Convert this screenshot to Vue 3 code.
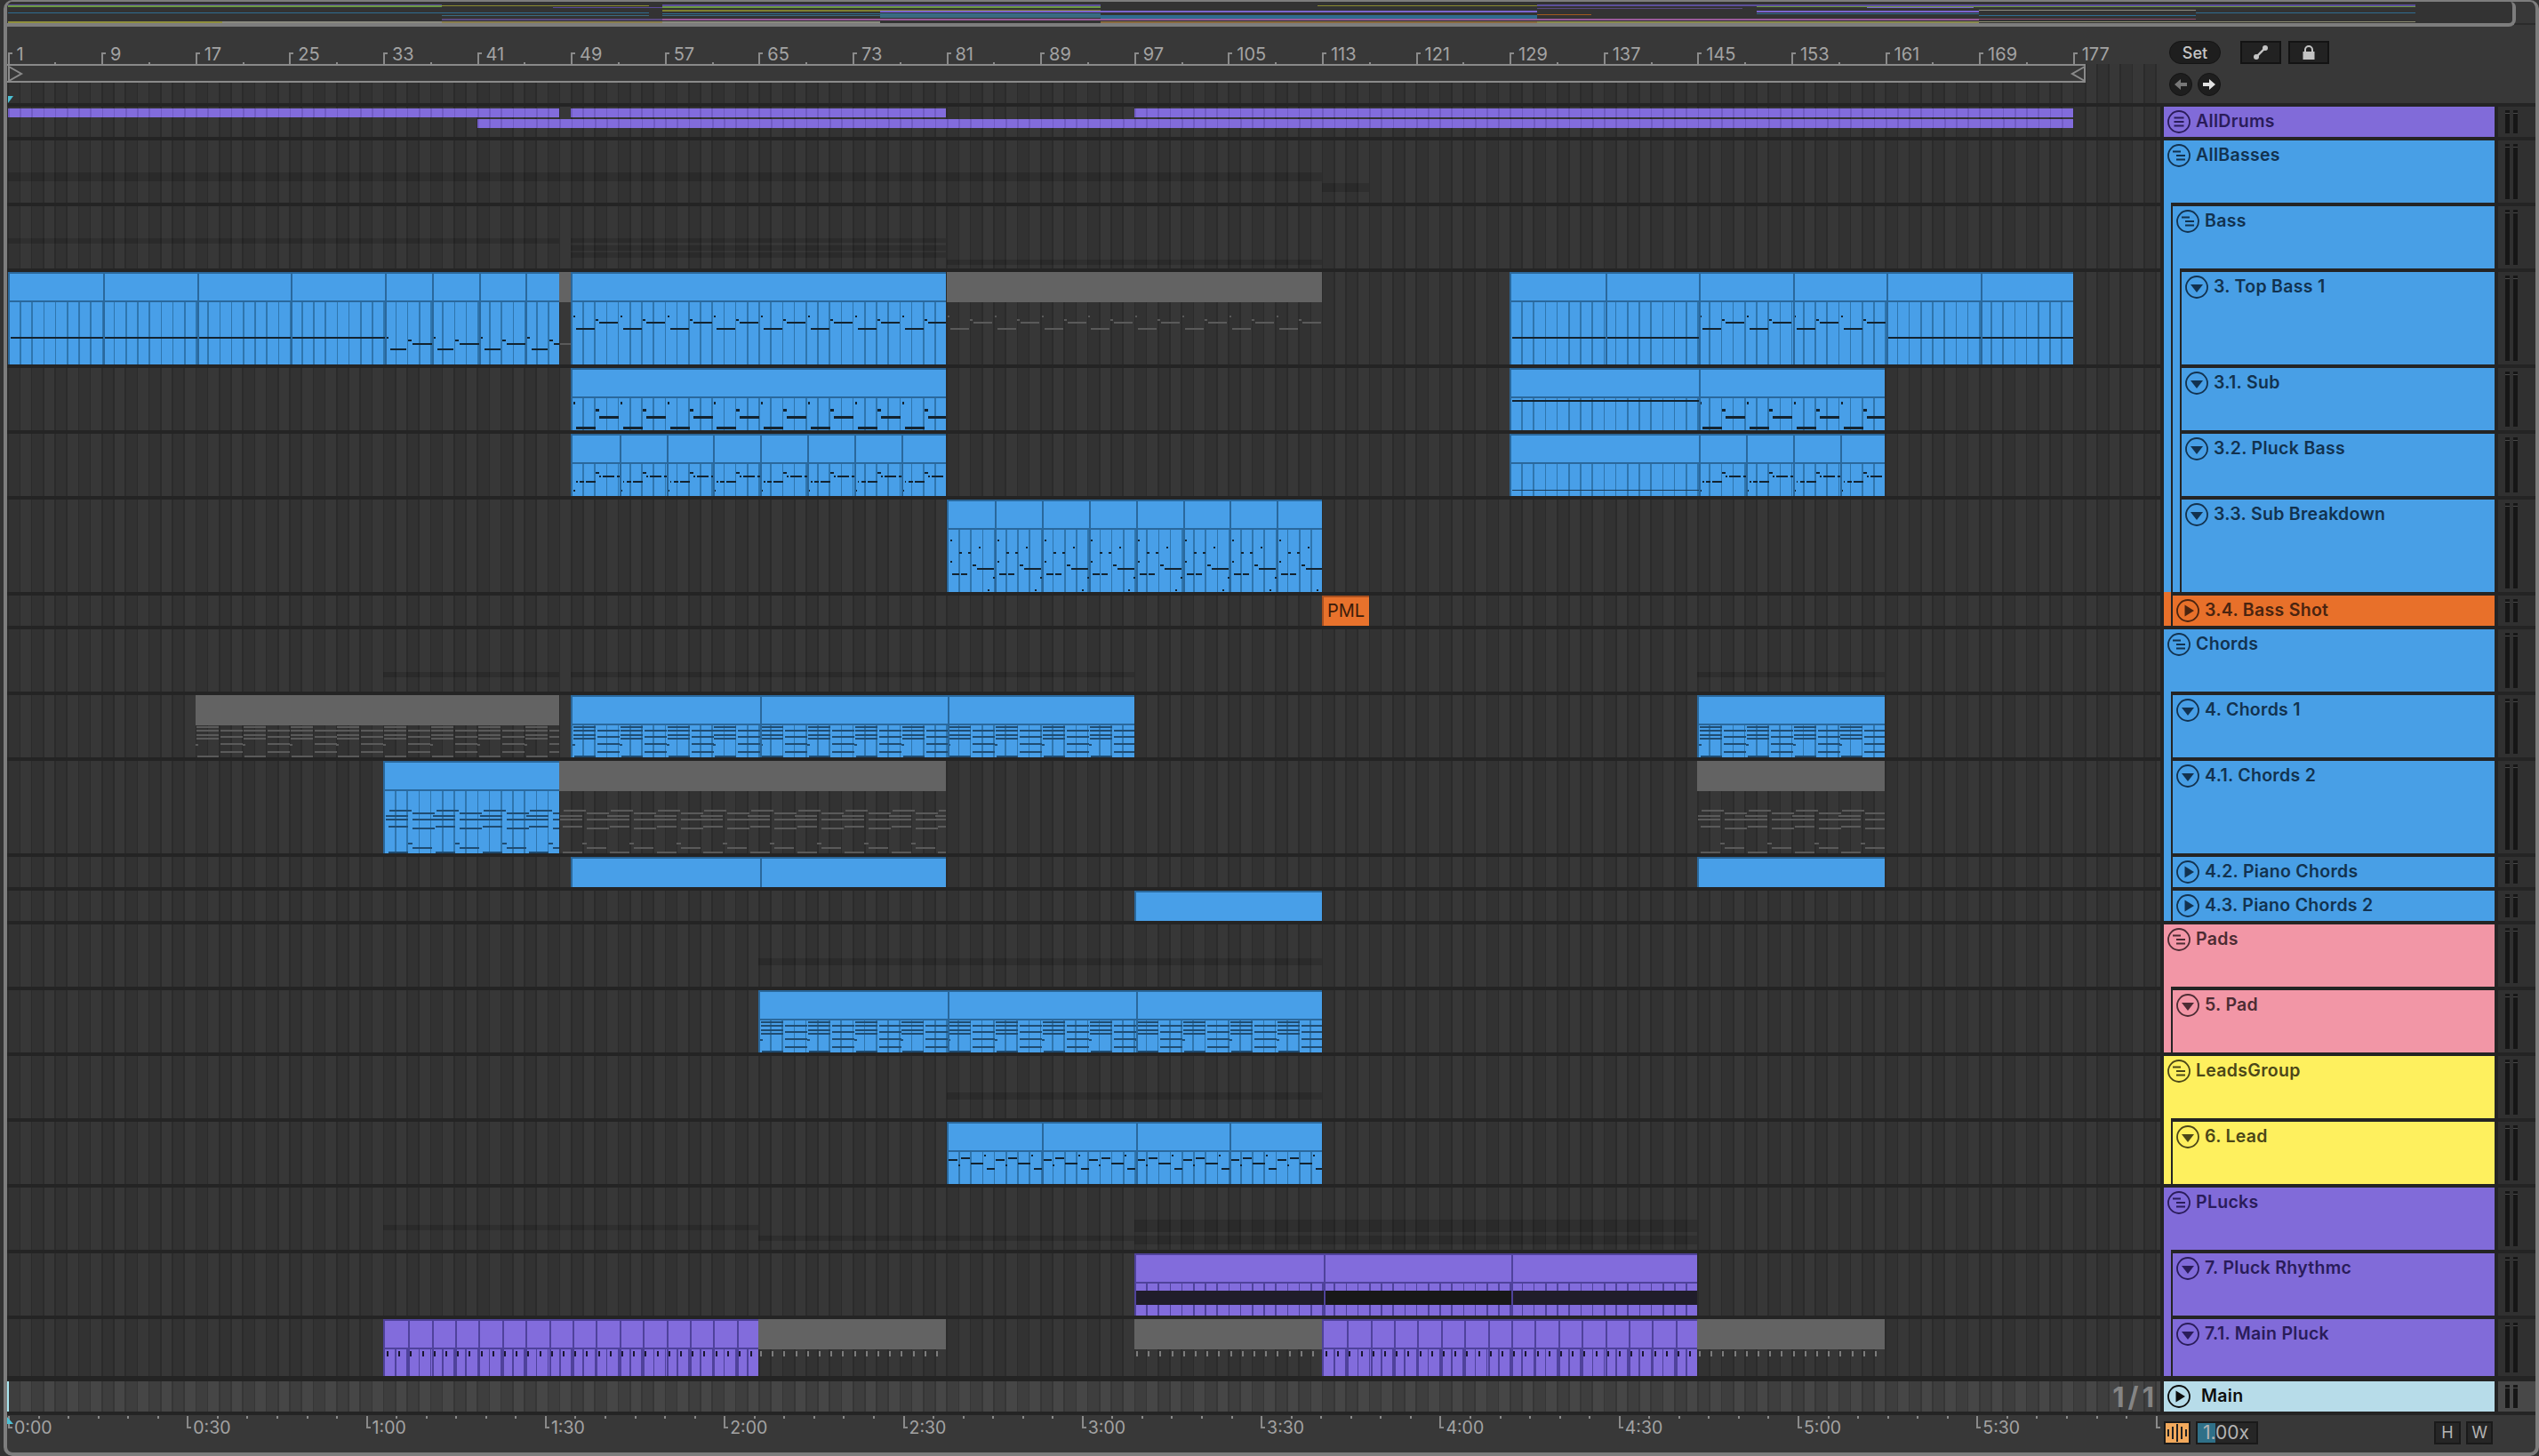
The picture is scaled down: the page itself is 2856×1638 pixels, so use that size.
<script setup>
// Arrangement view: timeline on the left, track headers on the right
const B = 13.2
const barX = (bar) => 0.5 + (bar - 1) * B

const rep = (clipFrom, from, to, pattern, periodBars = 4, fill) => {
  const out = []
  const start = (from - clipFrom) * B
  const end = (to - clipFrom) * B
  for (let x0 = start; x0 < end; x0 += periodBars * B) {
    for (const [x, y, w, h] of pattern) {
      const nx = x0 + x
      if (nx >= end) continue
      out.push({ x: nx, y, w: Math.min(w, end - nx), h, fill })
    }
  }
  return out
}
const line = (clipFrom, from, to, y, h = 2, fill) => [
  { x: (from - clipFrom) * B + 1, y, w: (to - from) * B - 1, h, fill }
]
const every = (from, to, step) => {
  const out = []
  for (let b = from + step; b < to; b += step) out.push(b)
  return out
}

const topBassA = [[1, 39, 3, 2], [6, 52, 18, 2], [26, 42, 4, 2], [31, 46, 22, 2]]
const topBassB = [[1, 15, 2, 2], [4, 29, 21, 2], [26, 19, 3, 2], [30, 22, 21, 2]]
const subPat = [[1, 4, 2, 3], [4, 32, 22, 3], [26, 12, 4, 3], [30, 20, 22, 3]]
const pluckPat = [[1, 29, 2, 2], [4, 19, 1.5, 2], [8, 19, 5, 2], [15, 19, 11, 2], [26, 9, 4, 2], [30, 13, 2, 2], [34, 13, 13, 2], [50, 13, 3, 2]]
const breakPat = [[2, 11, 2, 2], [12, 25, 3, 2], [22, 25, 3, 2], [34, 19, 2, 2], [2, 35, 2, 2], [4, 49, 8, 2], [14, 49, 7, 2], [27, 39, 4, 2], [32, 43, 19, 2], [50, 53, 2, 2], [44, 67, 2, 2]]
const chordShort = [[1, 1, 25, 2], [1, 5, 25, 2], [1, 10, 25, 2], [1, 14, 25, 2], [0, 21, 3, 2], [2, 34, 24, 2], [28, 5, 25, 2], [28, 12, 25, 2], [28, 20, 25, 2], [28, 29, 25, 2]]
const chordTall = [[5, 21, 25, 2], [1, 27, 25, 2], [1, 31, 25, 2], [4, 39, 22, 2], [4, 68, 22, 2], [31, 24, 25, 2], [31, 31, 25, 2], [31, 41, 25, 2], [26, 58, 5, 2], [31, 63, 22, 2]]
const leadPat = [[0, 8, 10, 2], [11, 14, 2, 2], [14, 6, 10, 2], [25, 12, 14, 2], [40, 3, 2, 2], [43, 18, 9, 2]]
const tickPat = [[2, 2, 2, 6]]

const DARK = '#13232f'
const CHORD = '#1f4c72'
const GHOST = '#5a5a5a'
const PDARK = '#1a1630'
const GTICK = '#7c7c7c'

const clip = (kind, from, to, extra = {}) => ({ kind, from, to, splits: [], notes: [], ...extra })
const shade = (from, to, dy, h) => ({ from, to, dy, h })

const tracks = [
  { name: 'AllDrums', level: 0, h: 34, color: 'purple', icon: 'lines',
    strips: [[1, 48, 2], [49, 81, 2], [97, 177, 2], [41, 177, 14]] },
  { name: 'AllBasses', level: 0, h: 70, color: 'blue', icon: 'group',
    shades: [shade(1, 113, 36, 10), shade(113, 117, 48, 10)] },
  { name: 'Bass', level: 1, h: 70, color: 'blue', icon: 'group',
    shades: [shade(1, 48, 36, 6), shade(49, 81, 36, 5), shade(49, 81, 44, 6), shade(49, 81, 52, 6), shade(81, 113, 60, 6)] },
  { name: '3. Top Bass 1', level: 2, h: 104, color: 'blue', icon: 'down', clips: [
    clip('blue', 1, 48, { splits: [9, 17, 25, 33, 37, 41, 45],
      notes: [...line(1, 1, 33, 39, 2, DARK), ...rep(1, 33, 48, topBassA, 4, DARK)] }),
    clip('gray', 48, 49, { notes: line(48, 48, 49, 46, 2, GHOST) }),
    clip('blue', 49, 81, { notes: rep(49, 49, 81, topBassB, 4, DARK) }),
    clip('gray', 81, 113, { notes: rep(81, 81, 113, topBassB, 4, GHOST) }),
    clip('blue', 129, 177, { splits: [137, 145, 153, 161, 169],
      notes: [...line(129, 129, 145, 39, 2, DARK), ...rep(129, 145, 161, topBassB, 4, DARK), ...line(129, 161, 177, 39, 2, DARK)] })
  ] },
  { name: '3.1. Sub', level: 2, h: 70, color: 'blue', icon: 'down', clips: [
    clip('blue', 49, 81, { notes: rep(49, 49, 81, subPat, 4, DARK) }),
    clip('blue', 129, 161, { splits: [145],
      notes: [...line(129, 129, 145, 2, 2, DARK), ...rep(129, 145, 161, subPat, 4, DARK)] })
  ] },
  { name: '3.2. Pluck Bass', level: 2, h: 70, color: 'blue', icon: 'down', clips: [
    clip('blue', 49, 81, { splits: every(49, 81, 4), notes: rep(49, 49, 81, pluckPat, 4, DARK) }),
    clip('blue', 129, 161, { splits: [145, 149, 153, 157],
      notes: [...line(129, 129, 145, 29, 1, '#1f3c55'), ...rep(129, 145, 161, pluckPat, 4, DARK)] })
  ] },
  { name: '3.3. Sub Breakdown', level: 2, h: 104, color: 'blue', icon: 'down', clips: [
    clip('blue', 81, 113, { splits: every(81, 113, 4), notes: rep(81, 81, 113, breakPat, 4, DARK) })
  ] },
  { name: '3.4. Bass Shot', level: 1, h: 34, color: 'orange', icon: 'play', clips: [
    clip('pml', 113, 117, { title: 'PML' })
  ] },
  { name: 'Chords', level: 0, h: 70, color: 'blue', icon: 'group',
    shades: [shade(33, 48, 48, 6), shade(49, 97, 48, 6), shade(145, 161, 48, 6)] },
  { name: '4. Chords 1', level: 1, h: 70, color: 'blue', icon: 'down', clips: [
    clip('gray', 17, 48, { notes: rep(17, 17, 48, chordShort, 4, GHOST) }),
    clip('blue', 49, 97, { splits: [65, 81], notes: rep(49, 49, 97, chordShort, 4, CHORD) }),
    clip('blue', 145, 161, { notes: rep(145, 145, 161, chordShort, 4, CHORD) })
  ] },
  { name: '4.1. Chords 2', level: 1, h: 104, color: 'blue', icon: 'down', clips: [
    clip('blue', 33, 48, { notes: rep(33, 33, 48, chordTall, 4, CHORD) }),
    clip('gray', 48, 81, { notes: rep(48, 48, 81, chordTall, 4, GHOST) }),
    clip('gray', 145, 161, { notes: rep(145, 145, 161, chordTall, 4, GHOST) })
  ] },
  { name: '4.2. Piano Chords', level: 1, h: 34, color: 'blue', icon: 'play', clips: [
    clip('blue small', 49, 81, { splits: [65] }),
    clip('blue small', 145, 161)
  ] },
  { name: '4.3. Piano Chords 2', level: 1, h: 34, color: 'blue', icon: 'play', clips: [
    clip('blue small', 97, 113)
  ] },
  { name: 'Pads', level: 0, h: 70, color: 'pink', icon: 'group', shades: [shade(65, 113, 38, 8)] },
  { name: '5. Pad', level: 1, h: 70, color: 'pink', icon: 'down', clips: [
    clip('blue', 65, 113, { splits: [81, 97], notes: rep(65, 65, 113, chordShort, 4, CHORD) })
  ] },
  { name: 'LeadsGroup', level: 0, h: 70, color: 'yellow', icon: 'group', shades: [shade(81, 113, 41, 8)] },
  { name: '6. Lead', level: 1, h: 70, color: 'yellow', icon: 'down', clips: [
    clip('blue', 81, 113, { splits: [89, 97, 105], notes: rep(81, 81, 113, leadPat, 4, DARK) })
  ] },
  { name: 'PLucks', level: 0, h: 70, color: 'purple', icon: 'group',
    shades: [shade(33, 65, 42, 6), shade(65, 97, 54, 6), shade(97, 145, 36, 14), shade(97, 145, 54, 10)] },
  { name: '7. Pluck Rhythmc', level: 1, h: 70, color: 'purple', icon: 'down', clips: [
    clip('purple', 97, 145, { splits: [113, 129],
      notes: [
        { x: 0, y: 8, w: 210, h: 16, fill: '#201d2a' },
        { x: 210, y: 8, w: 212, h: 16, fill: '#181818' },
        { x: 422, y: 8, w: 212, h: 16, fill: '#201d2a' }
      ] })
  ] },
  { name: '7.1. Main Pluck', level: 1, h: 64, color: 'purple', icon: 'down', clips: [
    clip('purple', 33, 65, { splits: every(33, 65, 2), notes: rep(33, 33, 65, tickPat, 1, PDARK) }),
    clip('gray', 65, 81, { notes: rep(65, 65, 81, tickPat, 1, GTICK) }),
    clip('gray', 97, 113, { notes: rep(97, 97, 113, tickPat, 1, GTICK) }),
    clip('purple', 113, 145, { splits: every(113, 145, 2), notes: rep(113, 113, 145, tickPat, 1, PDARK) }),
    clip('gray', 145, 161, { notes: rep(145, 145, 161, tickPat, 1, GTICK) })
  ] },
  { name: 'Main', level: 0, h: 34, sep: 6, color: 'main', icon: 'play', isMain: true }
]

const barMarks = every(-7, 177, 8).concat(177)
const minorMarks = every(1, 177, 4).filter((b) => (b - 1) % 8 !== 0)

const timeMarks = []
for (let i = 0; i <= 11; i++) {
  timeMarks.push({ x: i * 201.3, label: `${Math.floor(i / 2)}:${i % 2 ? '30' : '00'}` })
}
timeMarks.push({ x: 12 * 201.3, label: '' })
const timeTicks = []
for (let i = 1; i < 72; i++) {
  if (i % 6) timeTicks.push(i * 33.55)
}

const overviewLines = [
  [9, 497, 3, 1, '#5b4f9a'], [9, 497, 4, 2, '#6c9a42'], [9, 730, 12, 1, '#2f6c90'],
  [9, 250, 22, 2, '#8f8f3c'], [250, 497, 22, 2, '#8a8a80'],
  [497, 730, 4, 1, '#8a8a30'], [622, 745, 6, 1, '#5a4a9a'], [497, 730, 15, 1, '#3a6a80'],
  [497, 745, 19, 2, '#5a4a80'], [497, 745, 22, 2, '#8a7f50'], [668, 745, 24, 2, '#54443c'],
  [745, 1238, 3, 2, '#5b4f9a'], [745, 1238, 5, 2, '#6c9a42'], [745, 1238, 9, 2, '#7f7f30'],
  [745, 1238, 13, 1, '#2f6c90'], [745, 1238, 15, 1, '#3a6a80'], [745, 1238, 19, 2, '#9a5a9a'],
  [745, 990, 22, 2, '#8a8a80'], [730, 808, 24, 2, '#8a8a40'], [975, 1035, 24, 2, '#6aa040'],
  [990, 1238, 10, 2, '#7a66d0'], [990, 1238, 14, 4, '#3a6a80'],
  [1238, 1729, 10, 2, '#7a66d0'], [1238, 1729, 15, 4, '#2f6c90'], [1238, 1729, 19, 2, '#9a5a9a'],
  [1238, 1729, 22, 2, '#8a6a40'], [1482, 1729, 4, 1, '#8a8a30'],
  [1729, 1976, 3, 2, '#5b4f9a'], [1729, 1960, 7, 1, '#5a4a80'], [1729, 1790, 14, 1, '#a05a20'],
  [1729, 1976, 19, 2, '#9a5a9a'], [1729, 1976, 22, 2, '#8a8a50'],
  [1976, 2226, 3, 2, '#5b4f9a'], [1976, 2226, 5, 1, '#6c9a42'], [2100, 2220, 6, 1, '#7a66d0'],
  [1976, 2226, 10, 2, '#7a66d0'], [1976, 2226, 13, 1, '#2f6c90'], [1976, 2226, 19, 2, '#9a5a9a'],
  [1976, 2226, 22, 2, '#8a8a50'],
  [2226, 2717, 3, 2, '#5b4f9a'], [2226, 2717, 5, 1, '#6c9a42'], [2226, 2470, 9, 1, '#8a8a80'],
  [2226, 2470, 15, 1, '#2f6c90'], [2470, 2717, 12, 1, '#2f6c90'], [2226, 2470, 19, 1, '#8a4a6a'],
  [2226, 2717, 22, 1, '#8a8a70']
]
</script>

<template>
  <div class="app">
    <div class="frame">
      <div class="overview-row">
        <div class="overview">
          <svg class="overview-svg" viewBox="8 0 2818 24" preserveAspectRatio="none">
            <rect
              v-for="(l, i) in overviewLines"
              :key="i"
              :x="l[0]"
              :y="l[2]"
              :width="l[1] - l[0]"
              :height="l[3]"
              :fill="l[4]"
            />
          </svg>
        </div>
      </div>

      <div class="top-row">
        <div class="timeline-head">
          <div class="bar-numbers">
            <span
              v-for="b in barMarks"
              :key="b"
              class="bar-mark"
              :style="{ left: barX(b) + 'px' }"
            ><span class="bar-label">{{ b }}</span></span>
            <span
              v-for="b in minorMarks"
              :key="'m' + b"
              class="bar-minor"
              :style="{ left: barX(b) + 'px' }"
            ></span>
          </div>
          <div class="under-ruler">
            <div class="loop-bar">
              <svg class="brace brace-left" width="18" height="18" viewBox="0 0 18 18">
                <path d="M1 1 L15 9 L1 17 Z" fill="none" stroke="#8a8a8a" stroke-width="2" />
              </svg>
              <svg class="brace brace-right" width="18" height="18" viewBox="0 0 18 18">
                <path d="M17 1 L3 9 L17 17 Z" fill="none" stroke="#8a8a8a" stroke-width="2" />
              </svg>
            </div>
            <div class="scrub-row"><span class="cue"></span></div>
          </div>
        </div>
        <div class="controls">
          <div class="ctrl-row">
            <button class="set-btn">Set</button>
            <button class="sq-btn first">
              <svg width="18" height="18" viewBox="0 0 18 18">
                <path d="M4 14 L14 4" stroke="#c4c4c4" stroke-width="2.4" />
                <circle cx="4" cy="14" r="3" fill="#c4c4c4" />
                <circle cx="14" cy="4" r="3" fill="#c4c4c4" />
              </svg>
            </button>
            <button class="sq-btn">
              <svg width="18" height="18" viewBox="0 0 18 18">
                <path d="M5 9 V6 a4 4 0 0 1 8 0 V9" fill="none" stroke="#c4c4c4" stroke-width="2" />
                <rect x="2.5" y="8" width="13" height="9" fill="#c4c4c4" />
              </svg>
            </button>
          </div>
          <div class="ctrl-row arrows">
            <span class="round-btn">
              <svg width="18" height="18" viewBox="0 0 18 18">
                <path d="M2 9 L9 3 V7 H16 V11 H9 V15 Z" fill="#777" />
              </svg>
            </span>
            <span class="round-btn">
              <svg width="18" height="18" viewBox="0 0 18 18">
                <path d="M16 9 L9 3 V7 H2 V11 H9 V15 Z" fill="#e2e2e2" />
              </svg>
            </span>
          </div>
        </div>
      </div>

      <div class="tracks">
        <div v-for="t in tracks" :key="t.name" class="track" :class="{ 'is-main': t.isMain }">
          <div
            class="lane"
            :style="{ height: t.h + (t.sep || 4) + 'px', borderTopWidth: (t.sep || 4) + 'px' }"
          >
            <span
              v-for="(s, i) in t.shades || []"
              :key="'s' + i"
              class="shade"
              :style="{ left: barX(s.from) + 'px', width: (s.to - s.from) * B + 'px', top: s.dy + 'px', height: s.h + 'px' }"
            ></span>
            <span
              v-for="(s, i) in t.strips || []"
              :key="'d' + i"
              class="strip"
              :style="{ left: barX(s[0]) + 'px', width: (s[1] - s[0]) * B + 'px', top: s[2] + 'px' }"
            ></span>
            <div
              v-for="c in t.clips || []"
              :key="c.kind + c.from"
              class="clip"
              :class="c.kind"
              :style="{ left: barX(c.from) + 'px', width: (c.to - c.from) * B + 'px' }"
            >
              <div class="clip-title">{{ c.title }}</div>
              <div class="clip-body">
                <svg v-if="c.notes.length" class="notes" shape-rendering="crispEdges">
                  <rect
                    v-for="(n, i) in c.notes"
                    :key="i"
                    :x="n.x"
                    :y="n.y"
                    :width="n.w"
                    :height="n.h"
                    :fill="n.fill"
                  />
                </svg>
              </div>
              <span
                v-for="b in c.splits"
                :key="b"
                class="split"
                :style="{ left: (b - c.from) * B + 'px' }"
              ></span>
            </div>
            <span v-if="t.isMain" class="cue-line"></span>
            <span v-if="t.isMain" class="grid-size">1/1</span>
          </div>

          <div class="head" :class="t.color" :style="{ height: t.h + (t.sep || 4) + 'px' }">
            <span v-for="n in t.level" :key="n" class="guide"></span>
            <div class="head-body" :style="{ borderTopWidth: (t.sep || 4) + 'px' }">
              <svg class="fold" width="26" height="26" viewBox="0 0 26 26">
                <circle cx="13" cy="13" r="12" fill="none" stroke="currentColor" stroke-width="1.8" />
                <path
                  v-if="t.icon === 'lines'"
                  d="M7.5 8.5 H18.5 M7.5 13 H18.5 M7.5 17.5 H18.5"
                  stroke="currentColor"
                  stroke-width="2"
                />
                <path
                  v-else-if="t.icon === 'group'"
                  d="M6 8.5 H15 M10 13 H20 M10 17.5 H20"
                  stroke="currentColor"
                  stroke-width="2"
                />
                <path v-else-if="t.icon === 'down'" d="M6 10 H20 L13 19 Z" fill="currentColor" />
                <path v-else d="M9.5 6.5 V19.5 L20 13 Z" fill="currentColor" />
              </svg>
              <span class="track-name">{{ t.name }}</span>
            </div>
          </div>

          <div class="meter" :style="{ borderTopWidth: (t.sep || 4) + 'px' }">
            <span class="meter-bar"></span>
            <span class="meter-bar"></span>
          </div>
        </div>
      </div>

      <div class="footer">
        <div class="time-ruler">
          <span
            v-for="x in timeTicks"
            :key="x"
            class="time-tick"
            :style="{ left: 1 + x + 'px' }"
          ></span>
          <span
            v-for="m in timeMarks"
            :key="m.x"
            class="time-mark"
            :style="{ left: 1 + m.x + 'px' }"
          ><span class="time-label">{{ m.label }}</span></span>
          <span class="cue-bottom"></span>
        </div>
        <div class="foot-controls">
          <span class="wave-btn">
            <svg width="26" height="22" viewBox="0 0 26 22">
              <path
                d="M3 7 V15 M8 4 V18 M13 1 V21 M18 4 V18 M23 7 V15"
                stroke="#222"
                stroke-width="2"
              />
            </svg>
          </span>
          <span class="zoom-field">1.00x</span>
          <span class="foot-spacer"></span>
          <span class="key-btn">H</span>
          <span class="key-btn">W</span>
        </div>
      </div>
    </div>
  </div>
</template>

<style>
html,
body {
  margin: 0;
  background: #333;
}
</style>

<style scoped>
.app {
  width: 2856px;
  height: 1638px;
  box-sizing: border-box;
  padding-left: 4px;
  background: #333;
  font-family: Inter, "Noto Sans", sans-serif;
  overflow: hidden;
}
.frame {
  height: 100%;
  box-sizing: border-box;
  border: 4px solid #7d7d7d;
  border-top-width: 2px;
  border-radius: 10px;
  background: #383838;
  display: flex;
  flex-direction: column;
  overflow: hidden;
}

/* overview */
.overview-row {
  height: 28px;
  flex: none;
  border-bottom: 2px solid transparent;
  box-sizing: border-box;
  box-shadow: inset 0 -2px 0 #2b2b2b;
}
.overview {
  width: 2822px;
  height: 28px;
  box-sizing: border-box;
  border-right: 4px solid #7d7d7d;
  border-bottom: 4px solid #7d7d7d;
  border-radius: 0 6px 8px 0;
  background: #333;
}
.overview-svg {
  display: block;
  width: 100%;
  height: 24px;
}

/* beat ruler and locator bar */
.top-row {
  display: flex;
  height: 86px;
  flex: none;
}
.timeline-head {
  width: 2422px;
  display: flex;
  flex-direction: column;
}
.bar-numbers {
  height: 42px;
  position: relative;
  flex: none;
}
.bar-mark {
  position: absolute;
  bottom: 0;
  height: 13px;
  border-left: 2px solid #8a8a8a;
}
.bar-mark::before {
  content: "";
  position: absolute;
  left: 0;
  top: 0;
  width: 3px;
  height: 2px;
  background: #8a8a8a;
}
.bar-label {
  position: absolute;
  left: 8px;
  bottom: 1px;
  font-size: 20px;
  line-height: 20px;
  color: #a3a3a3;
  white-space: nowrap;
}
.bar-minor {
  position: absolute;
  bottom: 0;
  width: 2px;
  height: 2px;
  background: #8a8a8a;
}
.under-ruler {
  flex: 1;
  background-image: repeating-linear-gradient(90deg, #373737 0 0.5px, #2b2b2b 0.5px 2.1px, #323232 2.1px 13.7px, #2b2b2b 13.7px 15.3px, #373737 15.3px 26.4px);
}
.loop-bar {
  width: 2338px;
  height: 21px;
  box-sizing: border-box;
  border-top: 2px solid #8a8a8a;
  border-bottom: 2px solid #8a8a8a;
  background: #383838;
  position: relative;
}
.brace {
  position: absolute;
  top: 0;
}
.brace-left {
  left: 1px;
}
.brace-right {
  right: 0;
}
.scrub-row {
  height: 23px;
  position: relative;
}
.cue {
  position: absolute;
  left: 1px;
  bottom: 0;
  width: 0;
  height: 0;
  border-top: 8px solid #4cc0d4;
  border-right: 6px solid transparent;
}
.controls {
  padding: 16px 0 0 6px;
  margin-left: 4px;
  display: flex;
  flex-direction: column;
  gap: 10px;
}
.ctrl-row {
  display: flex;
  height: 26px;
  gap: 8px;
}
.arrows {
  gap: 6px;
}
.set-btn {
  width: 58px;
  height: 26px;
  padding: 0;
  border: 1px solid #141414;
  border-radius: 13px;
  background: #1e1e1e;
  color: #c6c6c6;
  font: 500 18px Inter, sans-serif;
}
.sq-btn {
  width: 46px;
  height: 26px;
  padding: 0;
  border: 2px solid #131313;
  background: #222;
  display: flex;
  align-items: center;
  justify-content: center;
}
.sq-btn.first {
  margin-left: 14px;
}
.round-btn {
  width: 26px;
  height: 26px;
  box-sizing: border-box;
  border: 1px solid #141414;
  border-radius: 50%;
  background: #1e1e1e;
  display: flex;
  align-items: center;
  justify-content: center;
}

/* tracks */
.tracks {
  flex: none;
  display: flex;
  flex-direction: column;
}
.track {
  display: grid;
  grid-template-columns: 2422px 372px 42px;
  column-gap: 4px;
  background: #242424;
}
.lane {
  position: relative;
  box-sizing: border-box;
  overflow: hidden;
  border-top: 4px solid #242424;
  background-image: repeating-linear-gradient(90deg, #373737 0 0.5px, #2b2b2b 0.5px 2.1px, #323232 2.1px 13.7px, #2b2b2b 13.7px 15.3px, #373737 15.3px 26.4px);
}
.is-main .lane {
  background-image: repeating-linear-gradient(90deg, #464646 0 0.5px, #363636 0.5px 2.1px, #3e3e3e 2.1px 13.7px, #363636 13.7px 15.3px, #464646 15.3px 26.4px);
}
.shade {
  position: absolute;
  background: rgba(0, 0, 0, 0.14);
}
.strip {
  position: absolute;
  height: 10px;
  background-image: repeating-linear-gradient(90deg, #715cc4 0 1.6px, #826cdc 1.6px 13.2px);
}

/* clips */
.clip {
  position: absolute;
  top: 0;
  bottom: 0;
  box-sizing: border-box;
  display: flex;
  flex-direction: column;
  overflow: hidden;
}
.clip-title {
  height: 34px;
  flex: none;
  box-sizing: border-box;
}
.clip-body {
  flex: 1;
  position: relative;
  min-height: 0;
}
.notes {
  position: absolute;
  left: 0;
  top: 0;
  width: 100%;
  height: 100%;
  overflow: hidden;
}
.split {
  position: absolute;
  top: 2px;
  width: 2px;
}
.clip.blue {
  border-left: 2px solid #2a689c;
}
.clip.blue .clip-title {
  border-top: 2px solid #2a689c;
  border-bottom: 2px solid #2a689c;
  background: #489fe8;
}
.clip.blue .clip-body {
  background-color: #489fe8;
  background-image: repeating-linear-gradient(90deg, #489fe8 0 11.2px, #2f75ad 11.2px 12.8px, #489fe8 12.8px 13.2px);
}
.clip.blue .split {
  bottom: 0;
  background: #2a689c;
}
.clip.blue.small .clip-title {
  height: 34px;
  border-bottom: 0;
}
.clip.blue.small .clip-body {
  display: none;
}
.clip.gray .clip-title {
  background: #636363;
}
.clip.purple {
  border-left: 2px solid #4f429b;
}
.clip.purple .clip-title {
  border-top: 2px solid #4f429b;
  border-bottom: 2px solid #4f429b;
  background: #826cdc;
}
.clip.purple .clip-body {
  background-color: #826cdc;
  background-image: repeating-linear-gradient(90deg, #826cdc 0 11.2px, #4f429b 11.2px 12.8px, #826cdc 12.8px 13.2px);
}
.clip.purple .split {
  bottom: 0;
  background: #4f429b;
}
.clip.pml {
  border-left: 2px solid #a9501f;
}
.clip.pml .clip-title {
  border-top: 2px solid #a9501f;
  background: #e8722c;
  color: #3c1c0a;
  font-size: 20px;
  line-height: 30px;
  padding-left: 4px;
  white-space: nowrap;
}

/* main track overlay */
.cue-line {
  position: absolute;
  left: 0;
  top: 0;
  bottom: 0;
  width: 2px;
  background: #a8e6f0;
}
.grid-size {
  position: absolute;
  right: 3px;
  top: 0;
  bottom: 0;
  display: flex;
  align-items: center;
  font-size: 31px;
  font-weight: 700;
  letter-spacing: 4px;
  color: #858585;
}

/* headers */
.head {
  display: flex;
  box-sizing: border-box;
  background: var(--track);
  color: var(--ink);
}
.head.blue {
  --track: #489fe6;
  --ink: #12324f;
}
.head.purple {
  --track: #816bd9;
  --ink: #2a1c5a;
}
.head.orange {
  --track: #e8702a;
  --ink: #4a2410;
}
.head.pink {
  --track: #f296a6;
  --ink: #4d2c33;
}
.head.yellow {
  --track: #fef05e;
  --ink: #4c4718;
}
.head.main {
  --track: #b7dce9;
  --ink: #0d0d0d;
}
.guide {
  width: 8px;
  flex: none;
  border-right: 2px solid #242424;
}
.head-body {
  flex: 1;
  min-width: 0;
  display: flex;
  align-items: flex-start;
  padding: 4px 0 0 4px;
  border-top: 4px solid #242424;
}
.fold {
  flex: none;
}
.track-name {
  margin-left: 6px;
  font-size: 19.5px;
  line-height: 24px;
  font-weight: 600;
  letter-spacing: 0.3px;
  white-space: nowrap;
}
.is-main .track-name {
  margin-left: 12px;
}

/* meters */
.meter {
  display: flex;
  gap: 4px;
  box-sizing: border-box;
  padding: 4px 0 4px 8px;
  border-top: 4px solid #242424;
  background: #303030;
}
.is-main .meter {
  background: #484848;
}
.meter-bar {
  width: 5px;
  background: linear-gradient(#161616 0 3px, #484848 3px 4px, #161616 4px);
}

/* footer */
.footer {
  flex: 1;
  display: flex;
  border-top: 4px solid #242424;
  min-height: 0;
}
.time-ruler {
  width: 2422px;
  position: relative;
  flex: none;
}
.time-tick {
  position: absolute;
  top: 1px;
  width: 2px;
  height: 3px;
  background: #8a8a8a;
}
.time-mark {
  position: absolute;
  top: 1px;
  height: 14px;
  border-left: 2px solid #8a8a8a;
}
.time-mark::after {
  content: "";
  position: absolute;
  left: 0;
  bottom: 0;
  width: 3px;
  height: 2px;
  background: #8a8a8a;
}
.time-label {
  position: absolute;
  left: 5px;
  top: 2px;
  font-size: 19.5px;
  line-height: 22px;
  color: #a3a3a3;
  white-space: nowrap;
}
.cue-bottom {
  position: absolute;
  left: 0;
  top: 2px;
  width: 0;
  height: 0;
  border-bottom: 8px solid #4cc0d4;
  border-right: 7px solid transparent;
}
.foot-controls {
  margin-left: 4px;
  width: 418px;
  padding-top: 7px;
  display: flex;
  align-items: flex-start;
  gap: 6px;
}
.wave-btn,
.zoom-field,
.key-btn {
  height: 26px;
  box-sizing: border-box;
  border: 2px solid #1a1a1a;
}
.wave-btn {
  width: 30px;
  background: #f2a95c;
  display: flex;
  align-items: center;
  justify-content: center;
}
.zoom-field {
  width: 70px;
  background: linear-gradient(90deg, #2f7088 0 20px, #262626 20px);
  color: #b4b4b4;
  font-size: 21px;
  line-height: 21px;
  padding-left: 6px;
}
.foot-spacer {
  width: 186px;
}
.key-btn {
  width: 30px;
  background: #262626;
  color: #b4b4b4;
  font-size: 18px;
  line-height: 22px;
  text-align: center;
}
</style>
